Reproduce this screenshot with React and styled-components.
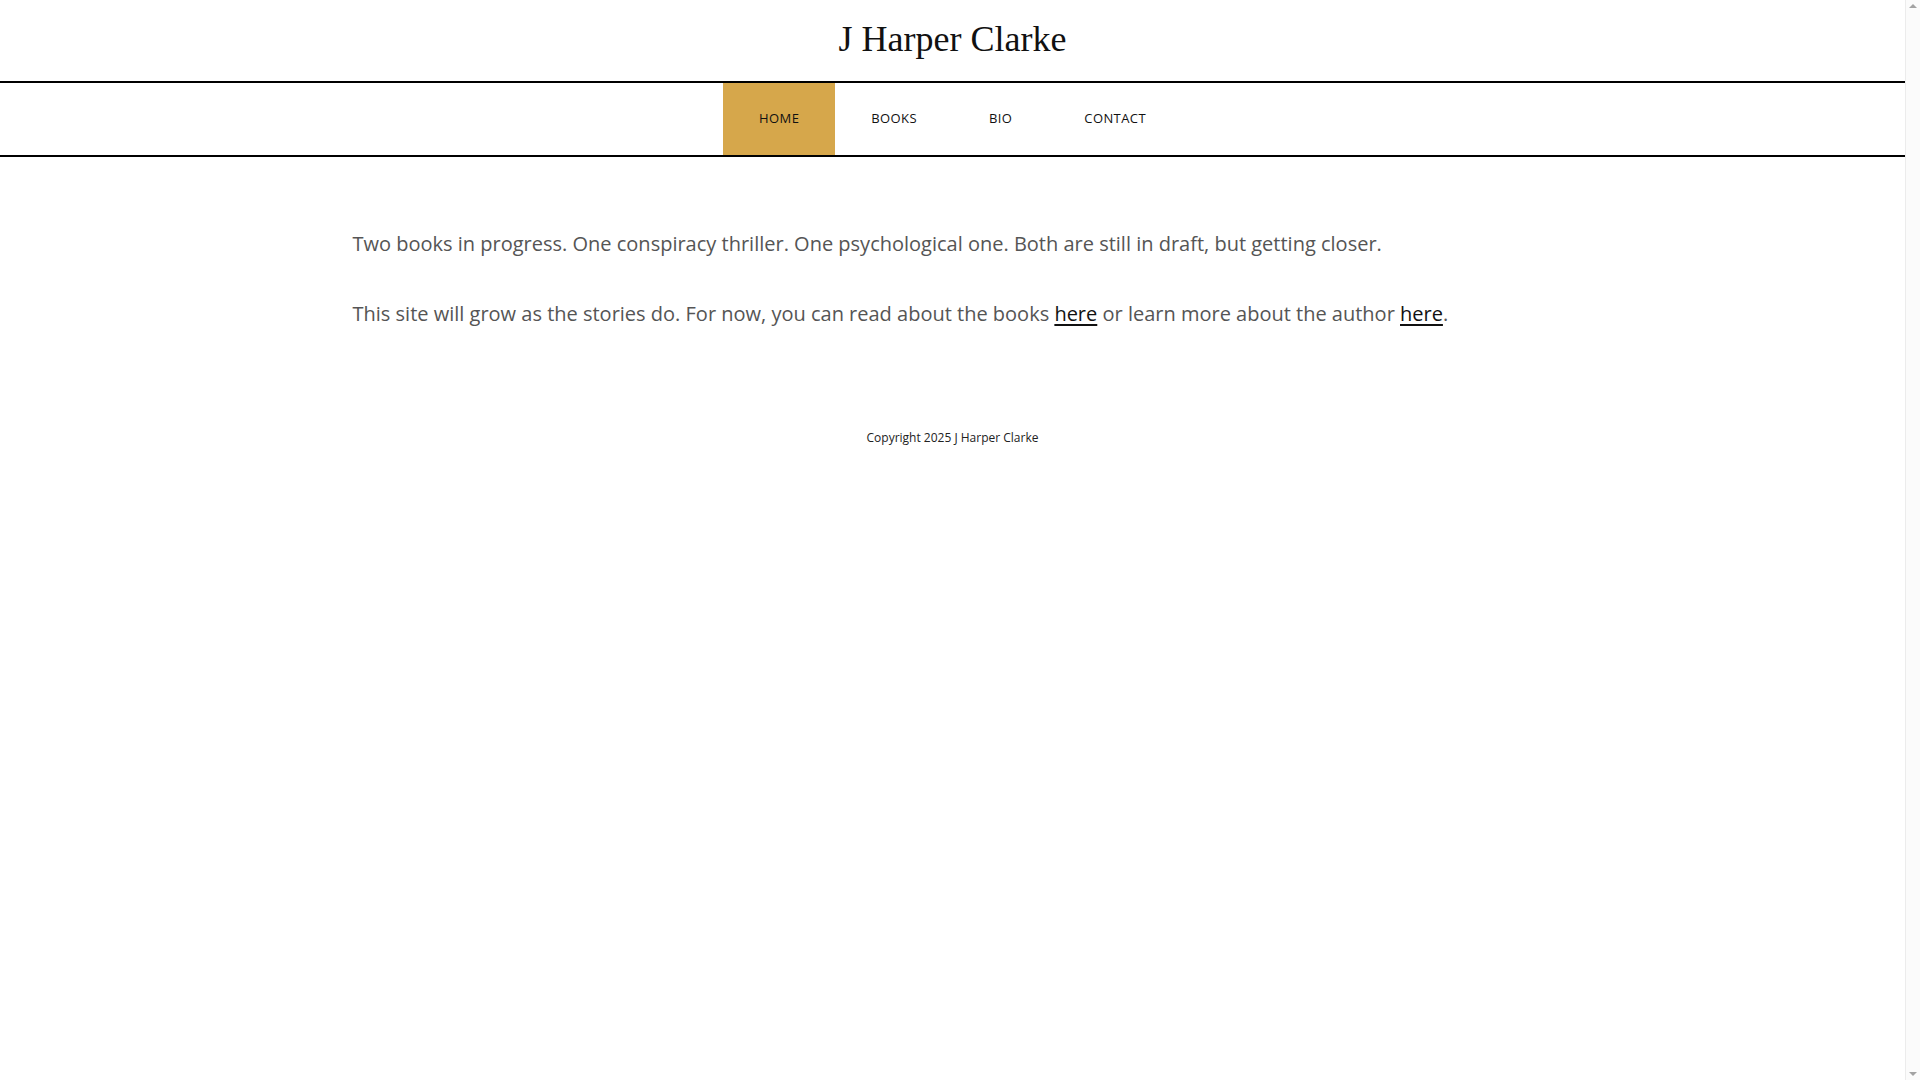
import React from 'react';
import styled, { createGlobalStyle } from 'styled-components';

const GlobalStyle = createGlobalStyle`
  body {
    margin: 0;
    background: #fff;
    font-family: "Open Sans", "Liberation Sans", sans-serif;
  }
`;

const Page = styled.div`
  margin-right: 15px;
`;

// stand-in for the browser's always-on vertical scrollbar
const ScrollTrack = styled.div`
  position: fixed;
  top: 0;
  right: 0;
  width: 15px;
  height: 100vh;
  background: #fbfbfb;
  border-left: 1px solid #ececec;
  box-sizing: border-box;
  display: flex;
  flex-direction: column;
  justify-content: space-between;
  align-items: center;
  padding: 4px 0;
`;

const Arrow = styled.span`
  width: 0;
  height: 0;
  border-left: 4px solid transparent;
  border-right: 4px solid transparent;
  ${(p) => (p.$up ? 'border-bottom: 4px solid #a3a3a3;' : 'border-top: 4px solid #a3a3a3;')}
`;

const Header = styled.header`
  height: 81px;
  display: flex;
  align-items: center;
  justify-content: center;
`;

const SiteTitle = styled.h1`
  margin: 0;
  font-family: "Liberation Serif", "Times New Roman", serif;
  font-weight: 400;
  font-size: 36px;
  line-height: 1;
  color: #111;
  padding-bottom: 3px;
`;

const NavBar = styled.nav`
  border-top: 2px solid #000;
  border-bottom: 2px solid #000;
  display: flex;
  justify-content: center;
`;

const NavItem = styled.a`
  display: block;
  padding: 0 36px 1px;
  height: 71px;
  line-height: 71px;
  font-size: 13px;
  letter-spacing: 0.4px;
  text-transform: uppercase;
  text-decoration: none;
  color: #111;
  background: ${(p) => (p.$active ? '#d6a74b' : 'transparent')};
`;

const Main = styled.main`
  max-width: 1200px;
  margin: 0 auto;
  padding-top: 71px;
`;

const Paragraph = styled.p`
  margin: 0 0 38px;
  font-size: 20px;
  line-height: 32px;
  color: #555;
`;

const Link = styled.a`
  color: #111;
  text-decoration: underline;
  text-underline-offset: 3px;
`;

const Footer = styled.footer`
  text-align: center;
  padding-top: 60px;
  font-size: 12px;
  line-height: 20px;
  color: #222;
`;

const navLinks = ['Home', 'Books', 'Bio', 'Contact'];

export default function App() {
  return (
    <>
      <GlobalStyle />
      <Page>
        <Header>
          <SiteTitle>J Harper Clarke</SiteTitle>
        </Header>
        <NavBar>
          {navLinks.map((label, i) => (
            <NavItem key={label} href="#" $active={i === 0}>
              {label}
            </NavItem>
          ))}
        </NavBar>
        <Main>
          <Paragraph>
            Two books in progress. One conspiracy thriller. One psychological one. Both are still in draft, but getting closer.
          </Paragraph>
          <Paragraph>
            This site will grow as the stories do. For now, you can read about the books <Link href="#">here</Link> or learn more about the author <Link href="#">here</Link>.
          </Paragraph>
        </Main>
        <Footer>Copyright 2025 J Harper Clarke</Footer>
      </Page>
      <ScrollTrack>
        <Arrow $up />
        <Arrow />
      </ScrollTrack>
    </>
  );
}
